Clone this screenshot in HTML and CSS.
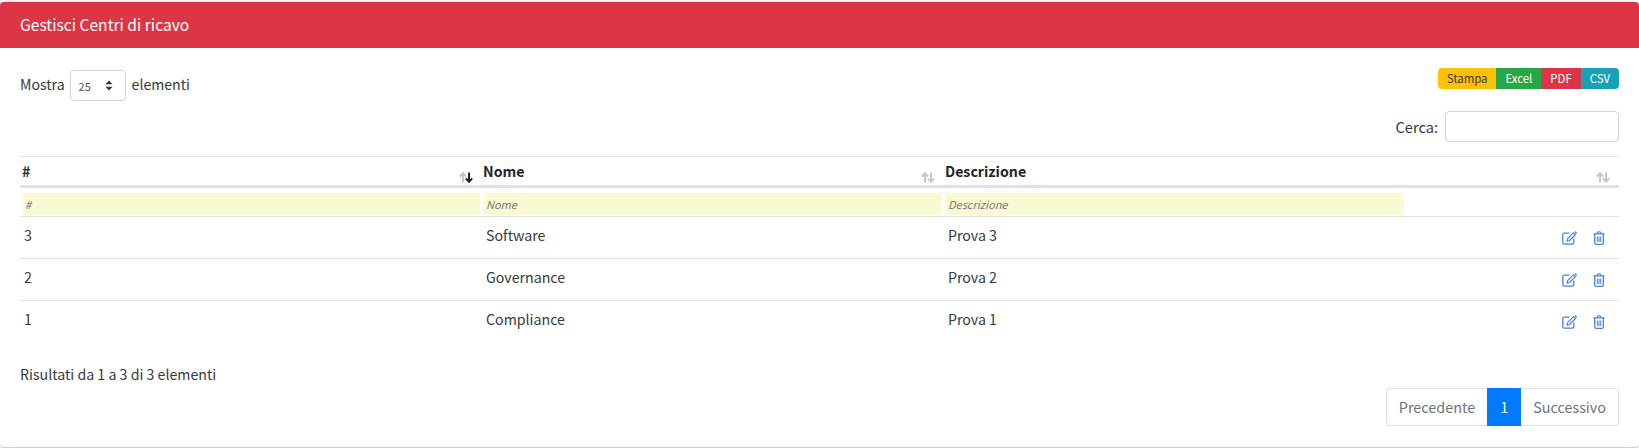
FILE: index.html
```html
<!DOCTYPE html>
<html lang="it">
<head>
<meta charset="utf-8">
<title>Gestisci Centri di ricavo</title>
<link rel="stylesheet" href="styles.css">
</head>
<body>
<svg class="defs" width="0" height="0" aria-hidden="true">
  <symbol id="edit" viewBox="0 0 15 14">
    <path d="M7.5 2.2H2.2A1.4 1.4 0 0 0 .8 3.6v8.2a1.4 1.4 0 0 0 1.4 1.4h8.2a1.4 1.4 0 0 0 1.4-1.4V7.6" fill="none" stroke="currentColor" stroke-width="1.3"/>
    <path d="M11.6 1.6l1.9 1.9-6 6-2.5.6.6-2.5z" fill="none" stroke="currentColor" stroke-width="1.2" stroke-linejoin="round"/>
    <path d="M12.4.8l.5-.4a.8.8 0 0 1 1.1 0l.7.7a.8.8 0 0 1 0 1.1l-.5.5z" fill="currentColor"/>
  </symbol>
  <symbol id="trash" viewBox="0 0 12 14">
    <path d="M.4 2.9h11.2M4 2.7l.6-1.5a.7.7 0 0 1 .6-.4h1.6a.7.7 0 0 1 .6.4l.6 1.5" fill="none" stroke="currentColor" stroke-width="1.2"/>
    <path d="M1.7 3v9a1.4 1.4 0 0 0 1.4 1.3h5.8a1.4 1.4 0 0 0 1.4-1.3V3" fill="none" stroke="currentColor" stroke-width="1.3"/>
    <path d="M4.3 5.5v5.5M6 5.5v5.5M7.7 5.5v5.5" fill="none" stroke="currentColor" stroke-width="1"/>
  </symbol>
  <symbol id="sort-up" viewBox="0 0 8 11">
    <path d="M4 10.5V1.2M.8 4.6L4 1.2l3.2 3.4" fill="none" stroke="currentColor" stroke-width="2"/>
  </symbol>
  <symbol id="sort-down" viewBox="0 0 8 11">
    <path d="M4 .5v9.3M.8 6.4L4 9.8l3.2-3.4" fill="none" stroke="currentColor" stroke-width="2"/>
  </symbol>
</svg>
<main class="card">
  <header class="card-header">Gestisci Centri di ricavo</header>
  <section class="card-body">
    <div class="top-row">
      <label class="length">Mostra
        <span class="fake-select">25
          <svg class="select-caret" width="8" height="11" viewBox="0 0 8 11" aria-hidden="true"><path d="M4 .5l3.6 3.7H.4zM4 10.5L.4 6.8h7.2z" fill="#343a40"/></svg>
        </span>
        elementi</label>
      <div class="buttons">
        <span class="btn btn-print">Stampa</span><span class="btn btn-excel">Excel</span><span class="btn btn-pdf">PDF</span><span class="btn btn-csv">CSV</span>
      </div>
    </div>
    <div class="search-row">
      <label class="search">Cerca: <span class="search-input"></span></label>
    </div>
    <table class="data">
      <colgroup><col class="col-main"><col class="col-main"><col class="col-main"><col class="col-actions"></colgroup>
      <thead>
        <tr class="head">
          <th>#<span class="sort"><svg class="arrow arrow-faded"><use href="#sort-up"/></svg><svg class="arrow arrow-dark"><use href="#sort-down"/></svg></span></th>
          <th>Nome<span class="sort"><svg class="arrow arrow-faded"><use href="#sort-up"/></svg><svg class="arrow arrow-faded"><use href="#sort-down"/></svg></span></th>
          <th>Descrizione</th>
          <th><span class="sort"><svg class="arrow arrow-faded"><use href="#sort-up"/></svg><svg class="arrow arrow-faded"><use href="#sort-down"/></svg></span></th>
        </tr>
        <tr class="filters">
          <td><span class="filter">#</span></td>
          <td><span class="filter">Nome</span></td>
          <td><span class="filter">Descrizione</span></td>
          <td></td>
        </tr>
      </thead>
      <tbody>
        <tr><td>3</td><td>Software</td><td>Prova 3</td><td class="actions"><svg class="ic-edit"><use href="#edit"/></svg><svg class="ic-trash"><use href="#trash"/></svg></td></tr>
        <tr><td>2</td><td>Governance</td><td>Prova 2</td><td class="actions"><svg class="ic-edit"><use href="#edit"/></svg><svg class="ic-trash"><use href="#trash"/></svg></td></tr>
        <tr><td>1</td><td>Compliance</td><td>Prova 1</td><td class="actions"><svg class="ic-edit"><use href="#edit"/></svg><svg class="ic-trash"><use href="#trash"/></svg></td></tr>
      </tbody>
    </table>
    <div class="info">Risultati da 1 a 3 di 3 elementi</div>
    <nav class="pager">
      <span class="page page-first">Precedente</span><span class="page page-active">1</span><span class="page page-last">Successivo</span>
    </nav>
  </section>
</main>
</body>
</html>
```
FILE: styles.css
```css
* { box-sizing: border-box; }
html, body { margin: 0; padding: 0; background: #fff; }
body {
  font-family: "Noto Sans CJK SC", "Source Sans Pro", "Noto Sans", sans-serif;
  font-size: 14.2px;
  line-height: 24px;
  color: #343a40;
  height: 448px;
  overflow: hidden;
  padding-top: 2px;
}
.defs { position: absolute; }
.card {
  height: 445px;
  border-radius: 4px;
  background: #fff;
  box-shadow: 0 0 8px rgba(0, 0, 0, .13), 0 1px 2px rgba(0, 0, 0, .2);
  overflow: hidden;
}
.card-header {
  height: 46px;
  background: #dc3545;
  color: #fff;
  padding: 10px 20px;
  font-size: 15.6px;
}
.card-body { padding: 20px 20px 0; }
.top-row { display: flex; justify-content: space-between; align-items: flex-start; height: 43px; }
.length { display: flex; align-items: flex-start; gap: 6px; height: 31px; margin-top: 2px; line-height: 28px; font-size: 14.1px; }
.fake-select {
  width: 56px;
  height: 31px;
  margin-left: -1px;
  border: 1px solid #ced4da;
  border-radius: 4px;
  font-size: 11px;
  color: #495057;
  padding: 3px 12px 3px 8px;
  display: flex;
  align-items: center;
  justify-content: space-between;
}
.buttons { display: flex; height: 21px; }
.btn { font-size: 11.4px; line-height: 21px; padding: 0 9px; color: #fff; }
.btn-print { background: #ffc107; color: #343a40; border-radius: 4px 0 0 4px; }
.btn-excel { background: #28a745; }
.btn-pdf { background: #dc3545; }
.btn-csv { background: #17a2b8; border-radius: 0 4px 4px 0; }
.search-row { display: flex; justify-content: flex-end; height: 45px; }
.search { display: flex; align-items: center; gap: 7px; height: 31px; font-size: 14.6px; }
.search-input { display: block; width: 174px; height: 31px; border: 1px solid #ced4da; border-radius: 4px; }
.data { width: 100%; table-layout: fixed; border-collapse: collapse; color: #343a40; }
.col-main { width: 462px; }
.head th {
  position: relative;
  height: 29px;
  padding: 2px 1px 2px;
  text-align: left;
  font-size: 14.2px;
  font-weight: 700;
  color: #212529;
  border-top: 1px solid #dee2e6;
  border-bottom: 3px solid #dee2e6;
}
.head th:first-child { padding-left: 2px; }
.sort { position: absolute; right: 9px; bottom: 2px; display: flex; height: 11px; }
.arrow { width: 8px; height: 11px; display: block; }
.arrow + .arrow { margin-left: -2px; }
.arrow-faded { color: #c4c8cc; }
.arrow-dark { color: #212529; }
.filters td { padding: 5px 2px 1px 2px; height: 28px; border-bottom: 1px solid #dee2e6; }
.filters td:first-child { padding-left: 3px; }
.filter {
  display: block;
  height: 22px;
  background: #fafad2;
  color: #757575;
  font-size: 11px;
  font-style: italic;
  line-height: 22px;
  padding-left: 2px;
}
tbody td { height: 42px; padding: 0 4px 5px; border-bottom: 1px solid #dee2e6; font-size: 14.2px; }
tbody tr:last-child td { border-bottom: 0; }
.actions { text-align: right; padding-right: 14px; padding-bottom: 3px; }
.ic-edit, .ic-trash { color: #4a80ea; height: 14px; vertical-align: -3px; }
.ic-edit { width: 15px; margin-right: 16px; }
.ic-trash { width: 12px; }
.info { margin-top: 19px; height: 24px; }
.pager { display: flex; justify-content: flex-end; margin-top: 2px; }
.page {
  height: 38px;
  line-height: 36px;
  padding: 0 12px;
  font-size: 14.4px;
  border: 1px solid #dee2e6;
  color: #6c757d;
  background: #fff;
}
.page-first { border-radius: 4px 0 0 4px; border-right: 0; }
.page-active { background: #007bff; border-color: #007bff; color: #fff; }
.page-last { border-radius: 0 4px 4px 0; border-left: 0; }
```
